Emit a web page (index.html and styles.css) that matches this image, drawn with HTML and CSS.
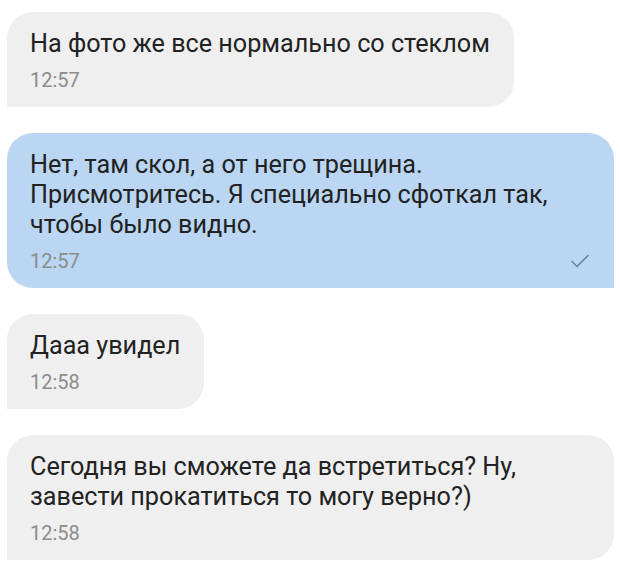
FILE: index.html
```html
<!DOCTYPE html>
<html lang="ru">
<head>
<meta charset="utf-8">
<link rel="stylesheet" href="styles.css">
</head>
<body>
<div class="chat">
  <div class="msg in">
    <div class="text">На фото же все нормально со стеклом</div>
    <div class="meta"><span class="time">12:57</span></div>
  </div>
  <div class="msg out">
    <div class="text">Нет, там скол, а от него трещина. Присмотритесь. Я специально сфоткал так, чтобы было видно.</div>
    <div class="meta"><span class="time">12:57</span>
      <svg class="check" width="20" height="16" viewBox="0 0 20 16"><path d="M2 8.5 L7 13.5 L18 2.5" fill="none" stroke="#6b8299" stroke-width="1.6" stroke-linecap="round" stroke-linejoin="round"/></svg>
    </div>
  </div>
  <div class="msg in">
    <div class="text">Дааа увидел</div>
    <div class="meta"><span class="time">12:58</span></div>
  </div>
  <div class="msg in">
    <div class="text">Сегодня вы сможете да встретиться? Ну, завести прокатиться то могу верно?)</div>
    <div class="meta"><span class="time">12:58</span></div>
  </div>
</div>
</body>
</html>
```
FILE: styles.css
```css
html, body {
  margin: 0;
  padding: 0;
  background: #ffffff;
}
body {
  font-family: Roboto, "Noto Sans", sans-serif;
  color: #222222;
}
.chat {
  display: flex;
  flex-direction: column;
  align-items: flex-start;
  gap: 26px;
  padding: 12px 6px 0 7px;
}
.msg {
  box-sizing: border-box;
  max-width: 607px;
  padding: 17px 24px 14px 23px;
  border-radius: 26px;
}
.msg.in {
  background: #efefef;
  border-bottom-left-radius: 0;
}
.msg.out {
  background: #bad6f2;
  width: 607px;
  border-bottom-right-radius: 0;
}
.text {
  font-size: 25.2px;
  line-height: 30px;
}
.meta {
  display: flex;
  justify-content: space-between;
  align-items: center;
  margin-top: 8px;
}
.time {
  font-size: 20px;
  line-height: 26px;
  color: #8c8c8c;
}
.check {
  margin-right: 0;
}
```
